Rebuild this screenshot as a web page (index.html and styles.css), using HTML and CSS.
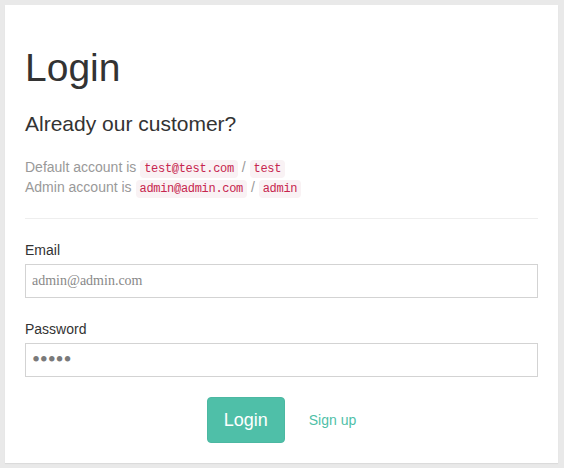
FILE: index.html
```html
<!DOCTYPE html>
<html lang="en">
<head>
<meta charset="utf-8">
<title>Login</title>
<link rel="stylesheet" href="styles.css">
</head>
<body>
<div class="panel">
  <h1 class="title">Login</h1>
  <h3 class="subtitle">Already our customer?</h3>
  <p class="hint">Default account is <code>test@test.com</code> / <code>test</code><br>Admin account is <code>admin@admin.com</code> / <code>admin</code></p>
  <hr class="divider">
  <form class="form">
    <label class="label" for="email">Email</label>
    <input class="field" id="email" type="text" value="admin@admin.com">
    <label class="label" for="password">Password</label>
    <input class="field field-pass" id="password" type="password" value="admin">
    <div class="actions">
      <button class="btn" type="button">Login</button>
      <a class="link" href="#">Sign up</a>
    </div>
  </form>
</div>
</body>
</html>
```

FILE: styles.css
```css
html, body {
  margin: 0;
  padding: 0;
}
body {
  background: #e9e9e9;
  font-family: "Liberation Sans", Arial, sans-serif;
  font-size: 14px;
  line-height: 20px;
  color: #333;
  padding: 5px 6px 5px 5px;
}
.panel {
  background: #fff;
  padding: 21px 20px 20px 20px;
  box-shadow: 0 1px 1px rgba(0,0,0,0.06);
}
.title {
  margin: 20px 0 0 0;
  font-size: 39px;
  line-height: 44px;
  font-weight: 400;
  color: #333;
}
.subtitle {
  margin: 22px 0 0 0;
  font-size: 21px;
  line-height: 24px;
  font-weight: 400;
  color: #333;
}
.hint {
  margin: 21px 0 0 0;
  color: #999;
}
code {
  font-family: "Liberation Mono", "DejaVu Sans Mono", monospace;
  font-size: 12px;
  line-height: 12px;
  letter-spacing: -0.3px;
  color: #c7254e;
  background: #f9f2f4;
  padding: 2px 4px;
  border-radius: 4px;
}
.divider {
  margin: 21px 0 0 0;
  border: 0;
  border-top: 1px solid #eee;
  height: 0;
}
.form {
  margin: 21px 0 0 0;
  display: flex;
  flex-direction: column;
}
.label {
  display: block;
  margin-bottom: 4px;
  color: #333;
}
.field {
  box-sizing: border-box;
  height: 34px;
  width: 100%;
  margin: 0 0 21px 0;
  padding: 6px 6px;
  border: 1px solid #d3d3d3;
  border-radius: 0;
  font-family: "Liberation Serif", "Times New Roman", serif;
  font-size: 14px;
  line-height: 20px;
  color: #888;
  outline: none;
}
.field-pass {
  margin-bottom: 20px;
  font-size: 23px;
  letter-spacing: -0.2px;
  color: #7a7a7a;
}
.actions {
  display: flex;
  justify-content: center;
  align-items: center;
  gap: 24px;
}
.btn {
  background: #4fbfa8;
  border: 1px solid #4cb8a2;
  color: #fff;
  font-family: "Liberation Sans", Arial, sans-serif;
  font-size: 18px;
  line-height: 24px;
  padding: 10px 16px;
  border-radius: 4px;
}
.link {
  color: #4fbfa8;
  text-decoration: none;
  font-size: 14px;
}
```
